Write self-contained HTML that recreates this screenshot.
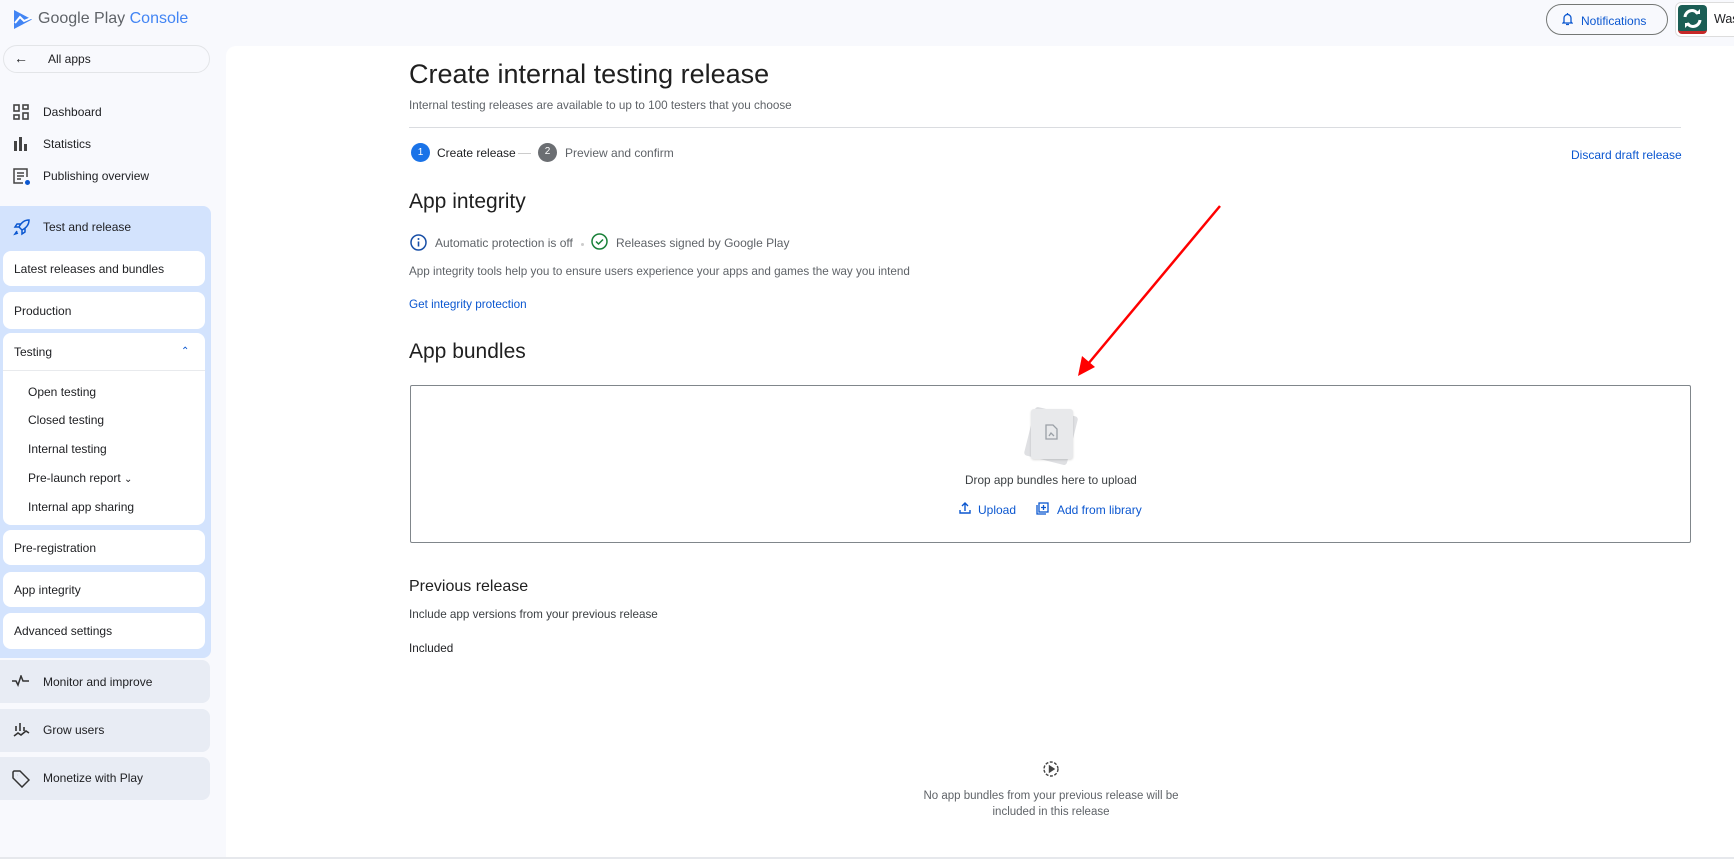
<!DOCTYPE html>
<html><head><meta charset="utf-8"><style>
*{box-sizing:border-box;margin:0;padding:0}
body{width:1734px;height:859px;overflow:hidden;background:#f8f9fd;font-family:"Liberation Sans",sans-serif;color:#202124;position:relative;font-size:12px}
.a{position:absolute;white-space:nowrap}
.blue{color:#0b57d0}
.side{font-size:12px;color:#202124}
.card{position:absolute;left:3px;width:202px;background:#fff;border-radius:8px}
.grp{position:absolute;left:0;width:210px;background:#e8ecf4;border-radius:0 8px 8px 0}
svg{position:absolute}
</style></head><body>
<svg style="left:13px;top:9px" width="20" height="21" viewBox="0 0 20 21"><path d="M1 1 L19 10.5 L1 20 Z" fill="#4285f4"/><path d="M2 14 L7 8 L11 12 L18 9" stroke="#fff" stroke-width="2" fill="none"/></svg>
<div class="a" style="left:38px;top:10px;font-size:16px;color:#5f6368">Google Play <span style="color:#4285f4">Console</span></div>
<div class="a" style="left:1546px;top:4px;width:122px;height:31px;border:1px solid #747775;border-radius:16px;font-size:12px;color:#0b57d0;padding:9px 0 0 34px">Notifications</div>
<svg style="left:1562px;top:12px" width="11" height="14" viewBox="0 0 11 14"><path d="M5.5 1v1M2 10V6a3.5 3.5 0 0 1 7 0v4l1 1H1zM4 12.5h3" stroke="#0b57d0" stroke-width="1.3" fill="none"/></svg>
<div class="a" style="left:1675px;top:2px;width:70px;height:35px;border:1px solid #ddd;border-radius:6px;background:#fff"></div>
<div class="a" style="left:1678px;top:5px;width:29px;height:29px;background:#1b5e55;border-radius:4px;border-bottom:3px solid #c62828"></div>
<svg style="left:1681px;top:8px" width="23" height="21" viewBox="0 0 23 21"><path d="M4 9a7 7 0 0 1 13-3M19 12a7 7 0 0 1-13 3" stroke="#fff" stroke-width="3" fill="none"/><path d="M14 6h5V1M9 15H4v5" fill="#fff"/></svg>
<div class="a" style="left:1714px;top:12px;font-size:12.5px">Was</div>

<div class="a" style="left:3px;top:45px;width:207px;height:28px;border:1px solid #e3e5e8;border-radius:14px;background:#f8f9fd"></div>
<div class="a side" style="left:14px;top:50px;font-size:14px">←</div>
<div class="a side" style="left:48px;top:52px">All apps</div>
<svg style="left:13px;top:104px" width="16" height="16" viewBox="0 0 16 16" fill="none" stroke="#444" stroke-width="1.6"><rect x="1" y="1" width="5" height="6"/><rect x="10" y="1" width="5" height="4"/><rect x="1" y="11" width="5" height="4"/><rect x="10" y="9" width="5" height="6"/></svg>
<div class="a side" style="left:43px;top:105px">Dashboard</div>
<svg style="left:14px;top:137px" width="15" height="14" viewBox="0 0 15 14" fill="#444"><rect x="0" y="4" width="3" height="10"/><rect x="5" y="0" width="3" height="14"/><rect x="10" y="7" width="3" height="7"/></svg>
<div class="a side" style="left:43px;top:137px">Statistics</div>
<svg style="left:13px;top:168px" width="18" height="18" viewBox="0 0 18 18" fill="none" stroke="#444" stroke-width="1.5"><path d="M10 15H1V1h13v8M4 5h7M4 8h7M4 11h4"/><circle cx="14.5" cy="14.5" r="2.5" fill="#0b57d0" stroke="none"/></svg>
<div class="a side" style="left:43px;top:169px">Publishing overview</div>

<div class="a" style="left:0;top:206px;width:211px;height:452px;background:#d3e3fd;border-radius:0 8px 8px 0"></div>
<svg style="left:13px;top:219px" width="17" height="17" viewBox="0 0 17 17" fill="none" stroke="#0b57d0" stroke-width="1.5"><path d="M16 1c-5 0-8 3-10 7l3 3c4-2 7-5 7-10zM6 8H2l2-3h4M9 11v4l3-2V9M4 12l-2 3 3-1"/></svg>
<div class="a side blue" style="left:43px;top:220px">Test and release</div>
<div class="card" style="top:251px;height:35px"></div><div class="a side" style="left:14px;top:262px">Latest releases and bundles</div>
<div class="card" style="top:292px;height:37px"></div><div class="a side" style="left:14px;top:304px">Production</div>
<div class="card" style="top:333px;height:192px"></div>
<div class="a" style="left:3px;top:370px;width:202px;height:1px;background:#e8eaed"></div>
<div class="a side blue" style="left:14px;top:345px">Testing</div>
<div class="a blue" style="left:181px;top:346px;font-size:10px">&#8963;</div>
<div class="a side" style="left:28px;top:385px">Open testing</div>
<div class="a side" style="left:28px;top:413px">Closed testing</div>
<div class="a side blue" style="left:28px;top:442px">Internal testing</div>
<div class="a side" style="left:28px;top:471px">Pre-launch report <span style="font-size:10px">&#8964;</span></div>
<div class="a side" style="left:28px;top:500px">Internal app sharing</div>
<div class="card" style="top:530px;height:35px"></div><div class="a side" style="left:14px;top:541px">Pre-registration</div>
<div class="card" style="top:572px;height:35px"></div><div class="a side" style="left:14px;top:583px">App integrity</div>
<div class="card" style="top:613px;height:36px"></div><div class="a side" style="left:14px;top:624px">Advanced settings</div>

<div class="grp" style="top:660px;height:43px"></div>
<svg style="left:12px;top:675px" width="18" height="12" viewBox="0 0 18 12" fill="none" stroke="#333" stroke-width="1.5"><path d="M0 6h4l2 4 3-9 2 5h6"/></svg>
<div class="a side" style="left:43px;top:675px">Monitor and improve</div>
<div class="grp" style="top:709px;height:43px"></div>
<svg style="left:13px;top:722px" width="17" height="16" viewBox="0 0 17 16" fill="none" stroke="#333" stroke-width="1.6"><path d="M3 9V4M7 9V1M11 9V5M1 14l4-3 3 2 5-4 3 2"/></svg>
<div class="a side" style="left:43px;top:723px">Grow users</div>
<div class="grp" style="top:757px;height:43px"></div>
<svg style="left:12px;top:770px" width="18" height="18" viewBox="0 0 18 18" fill="none" stroke="#333" stroke-width="1.5"><path d="M1 2v6l9 9 7-7-9-9H2zM5 5h.1"/></svg>
<div class="a side" style="left:43px;top:771px">Monetize with Play</div>

<div class="a" style="left:226px;top:46px;width:1508px;height:811px;background:#fff;border-radius:10px 0 0 0"></div>
<div class="a" style="left:0;top:857px;width:1734px;height:2px;background:#e6e8ec"></div>

<div class="a" style="left:409px;top:59px;font-size:27px;color:#1f1f1f">Create internal testing release</div>
<div class="a" style="left:409px;top:99px;font-size:11.7px;color:#5f6368">Internal testing releases are available to up to 100 testers that you choose</div>
<div class="a" style="left:409px;top:127px;width:1272px;height:1px;background:#dadce0"></div>
<div class="a" style="left:411px;top:143px;width:19px;height:19px;border-radius:50%;background:#1a73e8;color:#fff;font-size:10px;text-align:center;line-height:19px">1</div>
<div class="a" style="left:437px;top:146px;font-size:12px">Create release</div>
<div class="a" style="left:518px;top:153px;width:13px;height:1px;background:#ccc"></div>
<div class="a" style="left:538px;top:143px;width:19px;height:19px;border-radius:50%;background:#6b6e72;color:#fff;font-size:10px;text-align:center;line-height:18px">2</div>
<div class="a" style="left:565px;top:146px;font-size:12px;color:#5f6368">Preview and confirm</div>
<div class="a blue" style="left:1571px;top:148px;font-size:12px">Discard draft release</div>

<div class="a" style="left:409px;top:190px;font-size:21px;color:#1f1f1f">App integrity</div>
<svg style="left:410px;top:234px" width="17" height="17" viewBox="0 0 17 17"><circle cx="8.5" cy="8.5" r="7.5" fill="none" stroke="#174ea6" stroke-width="1.5"/><path d="M8.5 7.5v5" stroke="#174ea6" stroke-width="1.6"/><circle cx="8.5" cy="5" r="1" fill="#174ea6"/></svg>
<div class="a" style="left:435px;top:236px;font-size:12px;color:#5f6368">Automatic protection is off</div>
<div class="a" style="left:581px;top:243px;width:3px;height:3px;border-radius:50%;background:#ccc"></div>
<svg style="left:591px;top:233px" width="17" height="17" viewBox="0 0 17 17" fill="none" stroke="#188038" stroke-width="1.5"><circle cx="8.5" cy="8.5" r="7.5"/><path d="M5 8.5l2.5 2.5 4.5-4.5"/></svg>
<div class="a" style="left:616px;top:236px;font-size:12px;color:#5f6368">Releases signed by Google Play</div>
<div class="a" style="left:409px;top:265px;font-size:11.7px;color:#5f6368">App integrity tools help you to ensure users experience your apps and games the way you intend</div>
<div class="a blue" style="left:409px;top:298px;font-size:11.7px">Get integrity protection</div>

<div class="a" style="left:409px;top:340px;font-size:21px;color:#1f1f1f">App bundles</div>
<div class="a" style="left:410px;top:385px;width:1281px;height:158px;border:1px solid #80868b;border-radius:2px"></div>
<div class="a" style="left:1029px;top:411px;width:44px;height:50px;background:#dfe0e3;border-radius:3px;transform:rotate(14deg)"></div>
<div class="a" style="left:1031px;top:409px;width:42px;height:50px;background:#e8e9eb;border-radius:3px;box-shadow:0 1px 2px rgba(0,0,0,.15)"></div>
<svg style="left:1045px;top:424px" width="13" height="16" viewBox="0 0 13 16" fill="none" stroke="#9aa0a6" stroke-width="1.3"><path d="M1 1h7l4 4v10H1zM4 12l2-3 3 3"/></svg>
<div class="a" style="left:965px;top:473px;font-size:11.8px;color:#3c4043">Drop app bundles here to upload</div>
<svg style="left:959px;top:502px" width="12" height="12" viewBox="0 0 12 12" fill="none" stroke="#0b57d0" stroke-width="1.4"><path d="M6 9V1M3 4l3-3 3 3M1 8v3h10V8"/></svg>
<div class="a blue" style="left:978px;top:503px;font-size:12px">Upload</div>
<svg style="left:1036px;top:502px" width="13" height="13" viewBox="0 0 13 13" fill="none" stroke="#0b57d0" stroke-width="1.3"><rect x="3" y="1" width="9" height="9"/><path d="M1 3v9h9M7.5 3v5M5 5.5h5"/></svg>
<div class="a blue" style="left:1057px;top:503px;font-size:12px">Add from library</div>

<svg style="left:1070px;top:200px" width="160" height="185" viewBox="0 0 160 185"><path d="M150 6 L13 170" stroke="#f00" stroke-width="2.5"/><path d="M8 176 L12 156 L25 167 Z" fill="#f00"/></svg>

<div class="a" style="left:409px;top:578px;font-size:16px;color:#1f1f1f">Previous release</div>
<div class="a" style="left:409px;top:608px;font-size:11.7px;color:#3c4043">Include app versions from your previous release</div>
<div class="a" style="left:409px;top:642px;font-size:11.7px;color:#202124">Included</div>
<svg style="left:1043px;top:761px" width="16" height="16" viewBox="0 0 16 16" fill="none" stroke="#444" stroke-width="1.4"><circle cx="8" cy="8" r="7" stroke-dasharray="3 1.5"/><path d="M6.5 5v6l4.5-3z" fill="#444"/></svg>
<div class="a" style="left:851px;top:788px;width:400px;text-align:center;font-size:11.5px;color:#5f6368;line-height:16px;white-space:normal">No app bundles from your previous release will be<br>included in this release</div>
</body></html>
